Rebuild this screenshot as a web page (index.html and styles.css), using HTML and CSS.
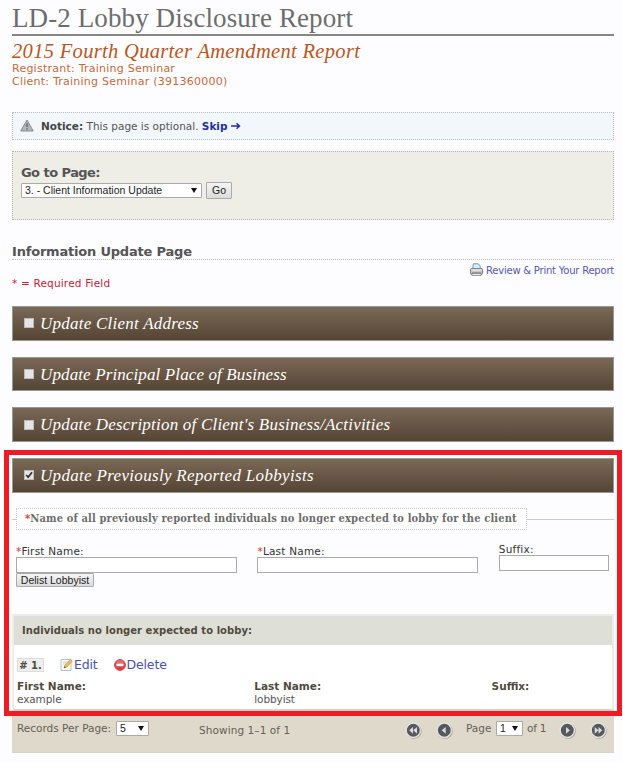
FILE: index.html
```
<!DOCTYPE html>
<html lang="en">
<head>
<meta charset="utf-8">
<title>LD-2 Lobby Disclosure Report</title>
<link rel="stylesheet" href="styles.css">
</head>
<body>
<main class="page">
  <h1 class="title"><span>LD-2 Lobby Disclosure Report</span></h1>
  <h2 class="subtitle"><span>2015 Fourth Quarter Amendment Report</span></h2>
  <div class="meta"><span>Registrant: Training Seminar</span></div>
  <div class="meta"><span>Client: Training Seminar (391360000)</span></div>

  <div class="notice">
    <svg class="warn" viewBox="0 0 14 13" width="14" height="13"><path d="M7 1 13.2 12H.8Z" fill="#b4b7ba" stroke="#85898d" stroke-linejoin="round"/><path d="M7 4.5v3.6M7 9.2v1.4" stroke="#5e6368" stroke-width="1.4"/></svg>
    <span><b>Notice:</b> This page is optional. <a class="skip">Skip <svg viewBox="0 0 10 8" width="10" height="8"><path d="M0 4H8M5.5 1.3 8.5 4 5.5 6.7" fill="none" stroke="#2430a0" stroke-width="1.5"/></svg></a></span>
  </div>

  <section class="goto">
    <h3><span>Go to Page:</span></h3>
    <div class="goto-row">
      <div class="select wide"><span>3. - Client Information Update</span><i class="caret"></i></div>
      <button class="btn go">Go</button>
    </div>
  </section>

  <h3 class="info"><span>Information Update Page</span></h3>
  <div class="print">
    <svg viewBox="0 0 13 13" width="13" height="13"><path d="M2.8 6 3.3.8h5L10.2 3V6Z" fill="#d8ecff" stroke="#6a94c4"/><rect x=".5" y="5.5" width="12" height="6" rx="1.3" fill="#c9c9c9" stroke="#808080"/><path d="M1.5 7h10" stroke="#f4f4f4"/><path d="M2 9.5h9" stroke="#999"/><rect x="2" y="10.6" width="9" height="1.8" fill="#eee" stroke="#777" stroke-width=".7"/></svg>
    <span>Review &amp; Print Your Report</span>
  </div>
  <div class="required"><span>* = Required Field</span></div>

  <div class="bar"><i class="check"></i><span class="t1">Update Client Address</span></div>
  <div class="bar"><i class="check"></i><span class="t2">Update Principal Place of Business</span></div>
  <div class="bar"><i class="check"></i><span class="t3">Update Description of Client's Business/Activities</span></div>
  <div class="bar"><i class="check"><svg viewBox="0 0 10 10" width="10" height="10"><path d="M2.2 5 4.2 7.2 8 2.3" fill="none" stroke="#333" stroke-width="1.8"/></svg></i><span class="t4">Update Previously Reported Lobbyists</span></div>

  <div class="legend-row">
    <div class="legend"><span><em>*</em>Name of all previously reported individuals no longer expected to lobby for the client</span></div>
  </div>

  <div class="fields">
    <div class="field"><label><em>*</em>First Name:</label><input type="text"><button class="btn delist">Delist Lobbyist</button></div>
    <div class="field"><label><em>*</em>Last Name:</label><input type="text"></div>
    <div class="field suffix"><label>Suffix:</label><input type="text"></div>
  </div>

  <section class="records">
    <div class="records-head"><span>Individuals no longer expected to lobby:</span></div>
    <div class="actions">
      <b class="num">#&nbsp;1.</b>
      <a class="edit"><svg viewBox="0 0 13 13" width="13" height="13"><path d="M1 1.5h10v11H1Z" fill="#f7f9fb" stroke="#b9c0c6"/><path d="M3 4h5M3 6h3" stroke="#c7d0d8"/><path d="M4 10 5 7.2 10.3 1.4 12.3 3.2 7 9Z" fill="#f1bb4c" stroke="#c99a4a" stroke-width=".7"/><path d="M4 10 4.6 8.2 5.9 9.4Z" fill="#5b4b38"/></svg><span>Edit</span></a>
      <a class="delete"><svg viewBox="0 0 12 12" width="12" height="12"><circle cx="6" cy="6" r="5.4" fill="#dc3d42" stroke="#c8474d"/><path d="M2 5a4 4 0 0 1 8 0Z" fill="#f08688" opacity=".6"/><rect x="2.5" y="4.8" width="7" height="2.4" rx=".5" fill="#fff"/></svg><span>Delete</span></a>
    </div>
    <div class="record">
      <div><b>First Name:</b><span>example</span></div>
      <div><b>Last Name:</b><span>lobbyist</span></div>
      <div><b>Suffix:</b></div>
    </div>
  </section>
  <footer class="pager">
    <span class="per">Records Per Page:</span>
    <div class="select five"><span>5</span><i class="caret"></i></div>
    <span class="showing">Showing 1–1 of 1</span>
    <svg class="round first" viewBox="0 0 17 17" width="17" height="17"><circle cx="8.9" cy="9" r="7.8" fill="#99968f"/><circle cx="8.3" cy="8.3" r="7.2" fill="#55585c" stroke="#e3e3e3" stroke-width="1.5"/><path d="M8 4.9v6.8L4.2 8.3ZM12 4.9v6.8L8.2 8.3Z" fill="#dcdcdc"/></svg>
    <svg class="round prev" viewBox="0 0 17 17" width="17" height="17"><circle cx="8.9" cy="9" r="7.8" fill="#99968f"/><circle cx="8.3" cy="8.3" r="7.2" fill="#55585c" stroke="#e3e3e3" stroke-width="1.5"/><path d="M9.7 4.9v6.8L5.8 8.3Z" fill="#dcdcdc"/></svg>
    <span class="pg">Page</span>
    <div class="select one"><span>1</span><i class="caret"></i></div>
    <span class="of">of 1</span>
    <svg class="round next" viewBox="0 0 17 17" width="17" height="17"><circle cx="8.9" cy="9" r="7.8" fill="#99968f"/><circle cx="8.3" cy="8.3" r="7.2" fill="#55585c" stroke="#e3e3e3" stroke-width="1.5"/><path d="M7 4.9v6.8L10.9 8.3Z" fill="#dcdcdc"/></svg>
    <svg class="round last" viewBox="0 0 17 17" width="17" height="17"><circle cx="8.9" cy="9" r="7.8" fill="#99968f"/><circle cx="8.3" cy="8.3" r="7.2" fill="#55585c" stroke="#e3e3e3" stroke-width="1.5"/><path d="M4.7 4.9v6.8L8.5 8.3ZM8.5 4.9v6.8L12.3 8.3Z" fill="#dcdcdc"/></svg>
  </footer>
</main>
<div class="highlight"></div>
</body>
</html>
```
FILE: styles.css
```
* { box-sizing: border-box; }
body {
  margin: 0;
  position: relative;
  height: 763px;
  overflow: hidden;
  background: #fdfdff;
  color: #555;
  font: 10.5px/13px "DejaVu Sans", Verdana, sans-serif;
}
h1, h2, h3 { margin: 0; font-weight: normal; }
span, b, label, a { white-space: nowrap; }
svg { display: block; flex: none; }
em { color: #c8303c; font-style: normal; }
.page { width: 602px; margin-left: 12px; }

.title {
  height: 36px;
  border-bottom: 2px solid #858581;
  color: #6d6d6d;
  font: 27px/36px "Liberation Serif", Georgia, serif;
  letter-spacing: 0.1px;
}
.subtitle {
  height: 25.5px;
  color: #b5571f;
  font: italic 20.5px/30px "Liberation Serif", Georgia, serif;
  letter-spacing: 0.32px;
}
.meta { height: 13.5px; line-height: 13.5px; color: #bf6c40; font-size: 11px; letter-spacing: 0.24px; }

.notice {
  display: flex;
  align-items: center;
  height: 28px;
  margin-top: 23.5px;
  padding-left: 7px;
  border: 1px dotted #b5bcc0;
  background: #f2f7fc;
}
.warn { margin: -2px 7px 0 0; }
.notice b { color: #444; }
.skip { color: #2430a0; font-weight: bold; }
.skip svg { display: inline-block; }

.goto {
  height: 69px;
  margin-top: 11px;
  padding: 12px 8px;
  border: 1px dotted #b4b6aa;
  background: #efeee6;
}
.goto h3 { height: 18px; font-weight: bold; font-size: 13px; line-height: 17px; letter-spacing: -0.55px; }
.goto-row { display: flex; gap: 4px; align-items: center; }
.select {
  display: flex;
  align-items: center;
  justify-content: space-between;
  height: 15px;
  padding: 0 4px 0 3px;
  border: 1px solid #aaa;
  border-radius: 1px;
  background: #fff;
  color: #222;
  font: 10.5px/13px "Liberation Sans", Arial, sans-serif;
}
.wide { width: 181px; }
.caret {
  border: 3px solid transparent;
  border-top: 5px solid #111;
  border-bottom: 0;
}
.btn {
  padding: 0;
  border: 1px solid #aaa;
  border-radius: 1px;
  background: linear-gradient(#f5f5f5, #dcdcdc);
  color: #222;
  font: 10.5px/13px "Liberation Sans", Arial, sans-serif;
}
.go { width: 26px; height: 17px; }

.info {
  height: 17px;
  margin-top: 23px;
  border-bottom: 1px dotted #bbb;
  font-weight: bold;
  font-size: 13px;
  line-height: 17px;
  letter-spacing: -0.2px;
}
.print {
  display: flex;
  justify-content: flex-end;
  gap: 3px;
  height: 14px;
  margin-top: 3px;
  line-height: 16px;
  font-size: 10px;
  letter-spacing: -0.22px;
  color: #5458ad;
}
.required { height: 29px; line-height: 12px; color: #c22338; letter-spacing: 0.18px; }

.bar {
  display: flex;
  align-items: center;
  height: 34.7px;
  margin-bottom: 16px;
  padding-left: 11px;
  border: 1px solid #929a92;
  background: linear-gradient(#7a6957, #564434);
  color: #fff;
  font: italic 17px/30px "Liberation Serif", Georgia, serif;
}
.bar span { padding-top: 1px; }
.t1 { letter-spacing: 0.24px; }
.t2 { letter-spacing: 0.12px; }
.t3 { letter-spacing: 0.21px; }
.t4 { letter-spacing: 0.32px; }
.check {
  width: 10px;
  height: 10px;
  margin-right: 6px;
  border: 1px solid #bbb;
  background: #e5e5e5;
}
.check svg { margin: -1px; }

.legend-row {
  display: flex;
  align-items: center;
  height: 22px;
  margin-top: -1px;
  padding-left: 4px;
  background: linear-gradient(#ccc, #ccc) 0 11px / 100% 1px no-repeat;
}
.legend {
  width: 511px;
  height: 22px;
  padding-left: 8px;
  border: 1px dotted #ccc;
  background: #fff;
  color: #6c6c6c;
  font: bold 11px/20px "DejaVu Serif Condensed", "DejaVu Serif", Georgia, serif;
  letter-spacing: 0.15px;
}

.fields {
  display: grid;
  grid-template-columns: 221px 221px 110px;
  column-gap: 20.4px;
  height: 84px;
  padding: 15px 0 0 4px;
}
.field { display: flex; flex-direction: column; align-items: flex-start; color: #333; }
.suffix { margin-top: -1.5px; }
.field label { height: 12px; line-height: 13px; letter-spacing: 0.22px; }
.field input { width: 100%; height: 16px; margin: 0; border: 1px solid #aaa; background: #fff; flex: none; }
.delist { width: 78px; height: 14px; line-height: 12px; flex: none; }

.records { height: 97px; border: 2px solid #ecece8; border-bottom-color: #d5d3c9; background: #fff; }
.records-head {
  height: 29px;
  padding-left: 8px;
  background: #dedfd7;
  color: #514a3d;
  font-weight: bold;
  font-size: 10px;
  line-height: 29px;
  letter-spacing: 0.05px;
}
.actions { display: flex; align-items: center; height: 40px; padding-left: 3px; color: #4a50b0; font-size: 12.5px; }
.actions a { display: flex; align-items: center; gap: 1px; letter-spacing: -0.15px; }
.num {
  width: 27px;
  height: 14px;
  margin-right: 16px;
  border: 1px solid #ddd;
  background: #eee;
  color: #514a3d;
  font-size: 10px;
  line-height: 13px;
  text-align: center;
}
.edit { width: 53.5px; }
.record { display: grid; grid-template-columns: repeat(3, 237.3px); margin-top: -4.5px; padding-left: 3px; width: 598px; overflow: hidden; }
.record div { display: flex; flex-direction: column; line-height: 12.5px; }
.record b { color: #514a3d; }
.record span { letter-spacing: -0.1px; }

.pager {
  display: flex;
  align-items: flex-start;
  height: 42px;
  padding: 10px 0 0 5px;
  border-bottom: 1px solid #d6d3c8;
  background: #dfd9cc;
  color: #666053;
}
.per { width: 99px; padding-top: 1px; }
.five { width: 33px; margin-right: 50px; }
.showing { width: 206px; padding-top: 3px; letter-spacing: 0.08px; }
.round { margin-top: 1px; }
.first { margin-right: 14px; }
.prev { margin-right: 13px; }
.pg { width: 30px; padding-top: 1px; }
.one { width: 27px; margin-right: 4px; }
.of { width: 32px; padding-top: 1px; letter-spacing: -0.2px; }
.next { margin-right: 14px; }

.highlight {
  position: absolute;
  left: 4px;
  top: 450px;
  width: 618px;
  height: 266px;
  border: 5px solid #ed1c24;
}
```
